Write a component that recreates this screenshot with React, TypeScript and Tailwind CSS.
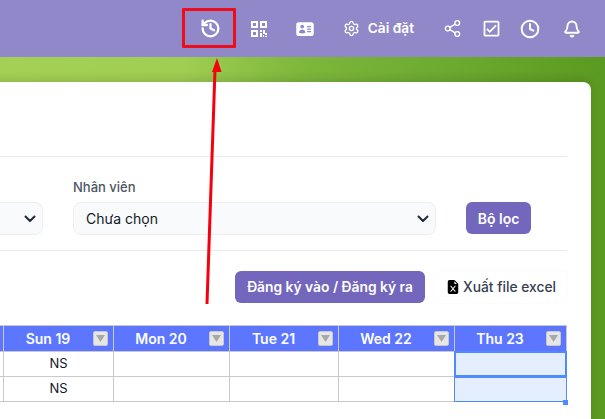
import React from 'react';
import { History, Settings, Share2, Clock, Bell } from 'lucide-react';
import { MdOutlineCheckBox } from 'react-icons/md';
import { HiIdentification } from 'react-icons/hi2';
import { BsFileEarmarkExcelFill } from 'react-icons/bs';

const days = [
  { label: 'Sun 19', width: 'w-[110px]', value: 'NS' },
  { label: 'Mon 20', width: 'w-[116px]', value: '' },
  { label: 'Tue 21', width: 'w-[109px]', value: '' },
  { label: 'Wed 22', width: 'w-[116px]', value: '' },
];

const Chevron = () => (
  <svg width="12" height="8" viewBox="0 0 12 8" fill="none" className="shrink-0">
    <path d="M1.5 1.5 6 6l4.5-4.5" stroke="#1f2937" strokeWidth="2" strokeLinecap="round" strokeLinejoin="round" />
  </svg>
);

const QrIcon = () => (
  <svg width="16" height="16" viewBox="0 0 16 16" fill="none" className="mr-[28px] shrink-0">
    <path
      fillRule="evenodd"
      clipRule="evenodd"
      fill="currentColor"
      d="M0 0h7v7H0zM2 2v3h3V2zM9 0h7v7H9zM11 2v3h3V2zM0 9h7v7H0zM2 11v3h3v-3zM9 9h2v2H9zM12 9h2v3h2v2h-2v-1h-2zM9 12h2v4H9zM12 14h1v2h-1zM14 15h2v1h-2z"
    />
  </svg>
);

const FilterBox = () => (
  <span className="absolute right-[5px] top-[5px] flex h-[15px] w-[15px] items-center justify-center rounded-[2px] border border-[#c8c8c8] bg-[#e6e6e6]">
    <svg width="9" height="7" viewBox="0 0 9 7">
      <path d="M0 0h9L4.5 7z" fill="#a8a8a8" />
    </svg>
  </span>
);

const HeaderCell = ({ label, width }: { label: string; width: string }) => (
  <div className={`relative flex h-full ${width} shrink-0 items-center justify-center border-r border-[#c9c9c9] pr-[21px] text-[14px] font-semibold text-white`}>
    {label}
    <FilterBox />
  </div>
);

export default function App() {
  return (
    <div className="relative h-[419px] w-[605px] overflow-hidden bg-[linear-gradient(90deg,#a4d155_0%,#9fce52_30%,#7db73c_50%,#6ba92f_75%,#5b9a20_100%)] font-['Inter',sans-serif]">
      <header className="flex h-[57px] items-center justify-end bg-[#9188c9] pr-[24px] text-white">
        <History size={21} strokeWidth={2.6} className="mr-[30px]" />
        <QrIcon />
        <HiIdentification size={20} className="mr-[28px]" />
        <Settings size={17} strokeWidth={1.9} className="mr-[8px]" />
        <span className="mr-[29px] text-[13.7px] font-semibold">Cài đặt</span>
        <Share2 size={19} strokeWidth={1.7} className="mr-[19px]" />
        <MdOutlineCheckBox size={21} className="mr-[18px]" />
        <Clock size={20} strokeWidth={2.4} className="mr-[23px]" />
        <Bell size={18} strokeWidth={2.5} />
      </header>

      <main className="ml-[-30px] mr-[14px] mt-[25px] h-[400px] rounded-[8px] bg-white pl-[30px] pr-[24px] pt-[74px] shadow-[0_-3px_10px_rgba(0,0,0,0.12)]">
        <div className="border-y border-[#e9eaf0] pb-[15px] pt-[22px]">
          <div className="flex items-end">
            <div className="flex h-[33px] w-[43px] items-center justify-end rounded-r-[8px] border border-l-0 border-[#eceef2] bg-[#f9fafb] pr-[6px]">
              <Chevron />
            </div>
            <div className="ml-[30px] w-[363px]">
              <div className="mb-[7px] text-[13px] font-medium leading-[16px] text-[#4b5563]">Nhân viên</div>
              <div className="flex h-[33px] items-center justify-between rounded-[8px] border border-[#eceef2] bg-[#f9fafb] pl-[12px] pr-[6px] text-[14px] text-[#111827]">
                Chưa chọn
                <Chevron />
              </div>
            </div>
            <button className="mb-[1px] ml-[30px] h-[32px] w-[65px] rounded-[6px] bg-[#7366bd] text-[14px] font-semibold text-white">
              Bộ lọc
            </button>
          </div>
        </div>

        <div className="mt-[20px] flex justify-end gap-[10px]">
          <button className="h-[32px] w-[190px] rounded-[6px] bg-[#7366bd] text-[13.8px] font-semibold text-white">
            Đăng ký vào / Đăng ký ra
          </button>
          <button className="flex h-[32px] w-[132px] items-center justify-center gap-[3px] rounded-[6px] bg-white text-[13.8px] font-medium text-[#374151] shadow-[0_0_2px_rgba(0,0,0,0.05)]">
            <BsFileEarmarkExcelFill size={14} className="text-black" />
            Xuất file excel
          </button>
        </div>

        <div className="mt-[22px] w-[567px] text-[14px]">
          <div className="flex h-[27px] border-y border-[#c9c9c9] bg-[#5c76ff]">
            <div className="h-full w-[4px] shrink-0 border-r border-[#c9c9c9]" />
            {days.map((d) => (
              <HeaderCell key={d.label} label={d.label} width={d.width} />
            ))}
            <HeaderCell label="Thu 23" width="w-[112px]" />
          </div>
          {[0, 1].map((row) => (
            <div key={row} className="flex h-[25px] border-b border-[#c9c9c9]">
              <div className="h-full w-[4px] shrink-0 border-r border-[#c9c9c9]" />
              {days.map((d) => (
                <div key={d.label} className={`flex h-full ${d.width} shrink-0 items-center justify-center border-r border-[#c9c9c9] text-[13px] text-[#111827]`}>
                  {d.value}
                </div>
              ))}
              <div className="relative h-full w-[112px] shrink-0 bg-[#e5eeff]">
                <div className={`absolute inset-y-[-1px] left-[-1px] right-0 ${row === 0 ? 'border-2' : 'border-x border-b border-t-2'} border-[#4f8bff]`} />
                {row === 1 && <div className="absolute bottom-[-4px] right-[-1px] h-[5px] w-[5px] bg-[#4f8bff]" />}
              </div>
            </div>
          ))}
        </div>
      </main>

      <div className="absolute left-[182px] top-[8px] h-[40px] w-[54px] rounded-[1px] border-[3px] border-[#ee0d1a]" />
      <svg className="absolute left-0 top-0" width="605" height="419" viewBox="0 0 605 419" fill="none">
        <path d="M207 304 215 70" stroke="#f5000f" strokeWidth="3" />
        <path d="M217 58 221.5 72H212z" fill="#f5000f" />
      </svg>
    </div>
  );
}
